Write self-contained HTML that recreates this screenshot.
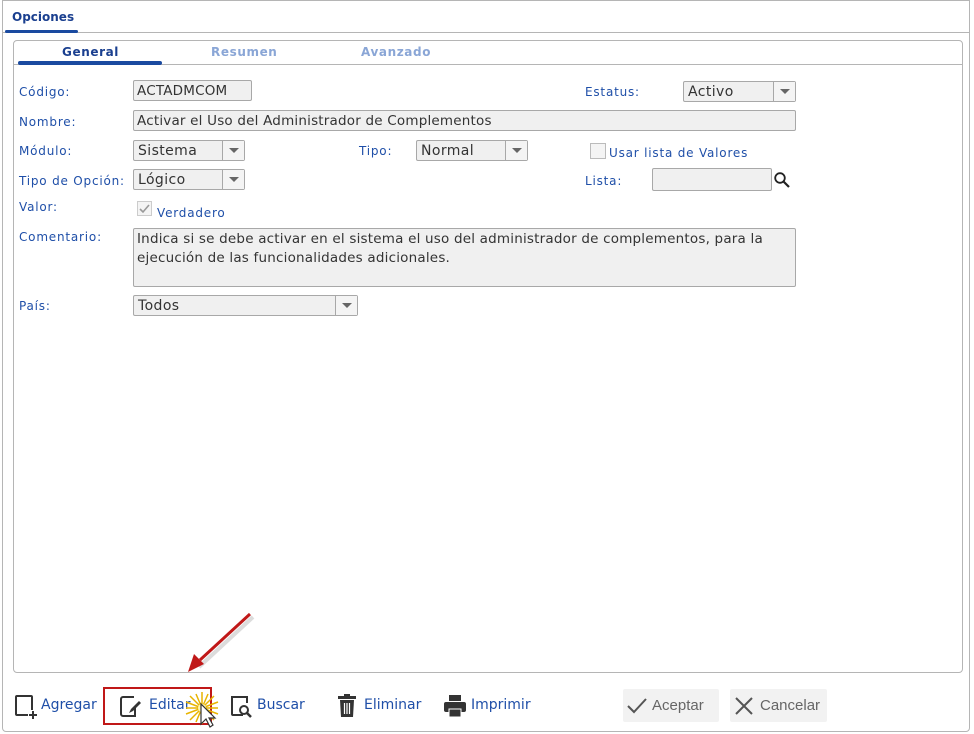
<!DOCTYPE html>
<html><head><meta charset="utf-8"><style>
*{box-sizing:border-box;margin:0;padding:0}
body{width:974px;height:734px;background:#fff;font-family:"DejaVu Sans","Liberation Sans",sans-serif;position:relative;overflow:hidden}
.abs{position:absolute}
.outer{left:2px;top:0;width:968px;height:732px;border:1px solid #b5b5b5;border-radius:0 0 4px 4px;background:#fff}
.lbl{position:absolute;font-size:12px;color:#1f4fa8;letter-spacing:0.8px}
.inp{position:absolute;background:#f0f0f0;border:1px solid #a8a8a8;border-radius:2px;font-size:13.5px;color:#333;padding-left:3px;padding-top:1px;line-height:19px;height:21px;letter-spacing:0.2px}
.sel{position:absolute;background:#f0f0f0;border:1px solid #a8a8a8;border-radius:2px;font-size:14px;color:#333;padding-left:4px;padding-top:1px;line-height:19px;height:21px;letter-spacing:0.4px}
.sel .ar{position:absolute;right:0;top:0;width:22px;height:19px;border-left:1px solid #a8a8a8;background:#f4f4f4}
.sel .ar:after{content:"";position:absolute;left:6px;top:7px;border-left:5px solid transparent;border-right:5px solid transparent;border-top:5px solid #666}
.btn{position:absolute;font-size:14px;color:#1f4fa8;top:697px}
</style></head><body>
<div class="abs outer"></div>
<div class="abs" style="left:2px;top:32px;width:968px;height:1px;background:#b5b5b5"></div>
<div class="abs" style="left:12px;top:10px;font-size:12px;font-weight:bold;color:#1a3f8f">Opciones</div>
<div class="abs" style="left:5px;top:30px;width:73px;height:3px;background:#1a4aa0;border-radius:2px"></div>
<div class="abs" style="left:13px;top:40px;width:950px;height:633px;border:1px solid #b5b5b5;border-radius:4px"></div>
<div class="abs" style="left:13px;top:64px;width:950px;height:1px;background:#b5b5b5"></div>
<div class="abs" style="left:62px;top:45px;font-size:12px;font-weight:bold;color:#1a3f8f;letter-spacing:0.6px">General</div>
<div class="abs" style="left:211px;top:45px;font-size:12px;font-weight:bold;color:#8aa6d6;letter-spacing:0.6px">Resumen</div>
<div class="abs" style="left:361px;top:45px;font-size:12px;font-weight:bold;color:#8aa6d6;letter-spacing:0.6px">Avanzado</div>
<div class="abs" style="left:18px;top:61px;width:144px;height:4px;background:#1a4aa0;border-radius:2px"></div>

<div class="lbl" style="left:19px;top:85px">Código:</div>
<div class="inp" style="left:133px;top:80px;width:119px">ACTADMCOM</div>
<div class="lbl" style="left:585px;top:85px">Estatus:</div>
<div class="sel" style="left:683px;top:81px;width:113px">Activo<div class="ar"></div></div>

<div class="lbl" style="left:19px;top:115px">Nombre:</div>
<div class="inp" style="left:133px;top:110px;width:663px">Activar el Uso del Administrador de Complementos</div>

<div class="lbl" style="left:19px;top:144px">Módulo:</div>
<div class="sel" style="left:133px;top:140px;width:112px">Sistema<div class="ar"></div></div>
<div class="lbl" style="left:359px;top:144px">Tipo:</div>
<div class="sel" style="left:416px;top:140px;width:112px">Normal<div class="ar"></div></div>
<div class="abs" style="left:590px;top:143px;width:16px;height:16px;border:1px solid #bbb;background:#f4f4f4"></div>
<div class="lbl" style="left:609px;top:146px">Usar lista de Valores</div>

<div class="lbl" style="left:19px;top:174px">Tipo de Opción:</div>
<div class="sel" style="left:133px;top:169px;width:112px">Lógico<div class="ar"></div></div>
<div class="lbl" style="left:585px;top:174px">Lista:</div>
<div class="inp" style="left:652px;top:168px;width:120px;height:23px"></div>
<svg class="abs" style="left:773px;top:171px" width="18" height="18" viewBox="0 0 18 18"><circle cx="7" cy="7" r="4.8" fill="none" stroke="#222" stroke-width="1.8"/><path d="M10.5 10.5L16 16" stroke="#222" stroke-width="2.2"/></svg>

<div class="lbl" style="left:19px;top:200px">Valor:</div>
<svg class="abs" style="left:137px;top:201px" width="16" height="16"><rect x="0.5" y="0.5" width="14" height="14" fill="#f4f4f4" stroke="#ccc"/><path d="M3 8l3 3 6-7" fill="none" stroke="#999" stroke-width="1.6"/></svg>
<div class="lbl" style="left:157px;top:206px">Verdadero</div>

<div class="lbl" style="left:19px;top:230px">Comentario:</div>
<div class="inp" style="left:133px;top:228px;width:663px;height:59px;line-height:19px;font-size:13.5px">Indica si se debe activar en el sistema el uso del administrador de complementos, para la ejecución de las funcionalidades adicionales.</div>

<div class="lbl" style="left:19px;top:299px">País:</div>
<div class="sel" style="left:133px;top:295px;width:225px">Todos<div class="ar"></div></div>

<!-- toolbar -->
<svg class="abs" style="left:14px;top:694px" width="24" height="26"><rect x="2" y="2" width="16" height="19" rx="1" fill="none" stroke="#333" stroke-width="2"/><rect x="14" y="16" width="10" height="10" fill="#fff"/><path d="M19 17v8M15 21h8" stroke="#333" stroke-width="2"/></svg>
<div class="btn" style="left:41px">Agregar</div>
<div class="abs" style="left:103px;top:687px;width:109px;height:38px;border:2px solid #c01818"></div>
<svg class="abs" style="left:118px;top:694px" width="28" height="24"><path d="M16 3H5a2 2 0 0 0-2 2v15a2 2 0 0 0 2 2h12V13" fill="none" stroke="#333" stroke-width="2"/><path d="M11 19l2-4 8-8 2 2-8 8z" fill="#333"/></svg>
<div class="btn" style="left:149px">Editar</div>
<svg class="abs" style="left:182px;top:690px" width="40" height="42"><g stroke="#e8b400" stroke-width="1.5"><path d="M20 2v32M4 18h32M8 6l24 24M32 6L8 30M14 4l12 28M26 4L14 32M4 12l32 12M4 24l32-12"/></g><circle cx="20" cy="18" r="4" fill="#fff6b0"/><path d="M19 14v20l5-5 4 8 3-2-4-7h6z" fill="#fff" stroke="#333" stroke-width="1.2"/></svg>
<svg class="abs" style="left:229px;top:694px" width="26" height="26"><path d="M14 21H4a1 1 0 0 1-1-1V3h15v6" fill="none" stroke="#333" stroke-width="2"/><circle cx="15" cy="16" r="4" fill="none" stroke="#333" stroke-width="2"/><path d="M18 19l4 4" stroke="#333" stroke-width="2.5"/></svg>
<div class="btn" style="left:257px">Buscar</div>
<svg class="abs" style="left:337px;top:694px" width="20" height="24"><rect x="1" y="2" width="18" height="3" fill="#333"/><rect x="7" y="0" width="6" height="3" fill="#333"/><path d="M3 6h14l-1 17H4z" fill="#333"/><path d="M7.5 9v11M10 9v11M12.5 9v11" stroke="#fff" stroke-width="1.2"/></svg>
<div class="btn" style="left:364px">Eliminar</div>
<svg class="abs" style="left:443px;top:694px" width="24" height="24"><rect x="6" y="1" width="12" height="6" fill="#333"/><rect x="1" y="8" width="22" height="10" rx="2" fill="#333"/><rect x="6" y="15" width="12" height="8" fill="#333" stroke="#fff" stroke-width="1"/></svg>
<div class="btn" style="left:471px">Imprimir</div>

<div class="abs" style="left:623px;top:689px;width:96px;height:33px;background:#f2f2f2;border-radius:2px"></div>
<svg class="abs" style="left:626px;top:697px" width="22" height="18"><path d="M2 9l6 6L20 2" fill="none" stroke="#555" stroke-width="2"/></svg>
<div class="abs" style="left:652px;top:697px;color:#666;font-family:'Liberation Sans',sans-serif;font-size:15px">Aceptar</div>
<div class="abs" style="left:730px;top:689px;width:97px;height:33px;background:#f2f2f2;border-radius:2px"></div>
<svg class="abs" style="left:734px;top:696px" width="20" height="20"><path d="M2 2l16 16M18 2L2 18" stroke="#555" stroke-width="2"/></svg>
<div class="abs" style="left:760px;top:697px;color:#666;font-family:'Liberation Sans',sans-serif;font-size:15px">Cancelar</div>

<!-- arrow -->
<svg class="abs" style="left:180px;top:608px" width="80" height="70"><path d="M70 6L16 56" stroke="#bbb" stroke-width="4" opacity=".5" transform="translate(3,3)"/><path d="M70 6L20 52" stroke="#c01818" stroke-width="3"/><path d="M8 64l6-18 10 10z" fill="#c01818"/></svg>
</body></html>
